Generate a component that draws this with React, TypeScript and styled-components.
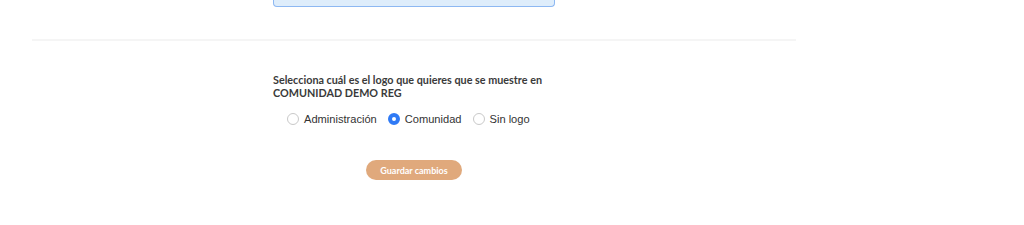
import styled, { createGlobalStyle } from 'styled-components'

const options = [
	{ id: 'admin', label: 'Administración' },
	{ id: 'community', label: 'Comunidad' },
	{ id: 'none', label: 'Sin logo' },
]

export default function App() {
	const selected = 'community'

	return (
		<>
			<GlobalStyle />
			<Page>
				<NoticeBox />
				<Divider />

				<Form>
					<Question>
						Selecciona cuál es el logo que quieres que se muestre en
						<br />
						COMUNIDAD DEMO REG
					</Question>

					<RadioGroup>
						{options.map((option) => (
							<RadioLabel key={option.id}>
								<RadioCircle checked={option.id === selected} />
								{option.label}
							</RadioLabel>
						))}
					</RadioGroup>

					<SaveButton type='button'>Guardar cambios</SaveButton>
				</Form>
			</Page>
		</>
	)
}

const GlobalStyle = createGlobalStyle`
	body {
		margin: 0;
		background-color: #FFFFFF;
		font-family: 'Liberation Sans', Arial, sans-serif;
	}
`

const Page = styled.div`
	width: 764px;
	margin-left: 32px;
	display: flex;
	flex-direction: column;
`

const NoticeBox = styled.div`
	width: 282px;
	height: 7px;
	margin: 0 auto;
	box-sizing: border-box;
	background-color: #DEEDFB;
	border: 1px solid #8DB8F2;
	border-top: none;
	border-radius: 0 0 4px 4px;
`

const Divider = styled.div`
	height: 2px;
	margin-top: 32px;
	background-color: #F5F5F5;
`

const Form = styled.div`
	width: 282px;
	margin: 32px auto 0;
	display: flex;
	flex-direction: column;
`

const Question = styled.p`
	margin: 0;
	font-family: Lato, 'Open Sans', sans-serif;
	font-weight: 700;
	font-size: 10.8px;
	line-height: 13px;
	color: #3A3A3A;
`

const RadioGroup = styled.div`
	display: flex;
	align-items: center;
	gap: 11px;
	margin-top: 12px;
	padding-left: 14px;
`

const RadioLabel = styled.label`
	display: flex;
	align-items: center;
	gap: 5px;
	height: 16px;
	font-size: 11.1px;
	color: #333333;
`

const RadioCircle = styled.span<{ checked?: boolean }>`
	width: 12px;
	height: 12px;
	box-sizing: border-box;
	border-radius: 50%;
	border: ${({ checked }) => checked ? '4px solid #2F7AF5' : '1px solid #C9C9C9'};
	background-color: #FFFFFF;
`

const SaveButton = styled.button`
	align-self: center;
	width: 96px;
	height: 20px;
	margin-top: 33px;
	border: none;
	border-radius: 10px;
	background-color: #E0A97C;
	color: #FFFFFF;
	font-family: Lato, 'Open Sans', sans-serif;
	font-weight: 700;
	font-size: 9px;
	padding: 0;
	cursor: pointer;
`
